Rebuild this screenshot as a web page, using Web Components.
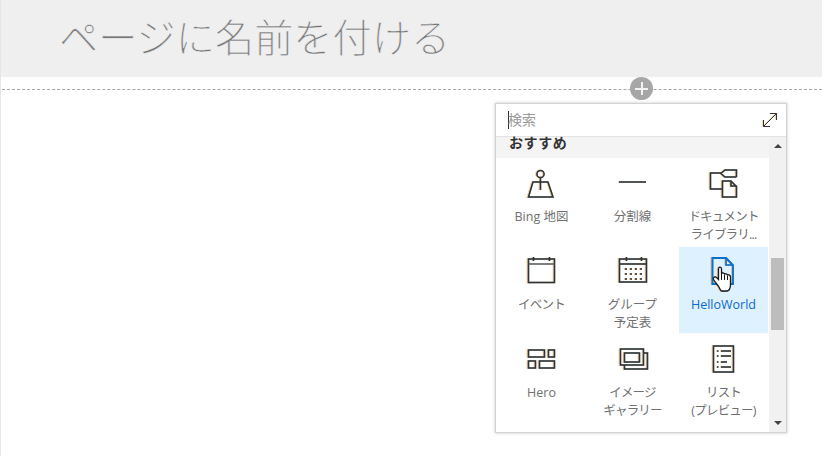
<!DOCTYPE html>
<html lang="ja"><head><meta charset="utf-8"><title>Page</title>
<style>
html,body{margin:0;padding:0;background:#fff;height:100%;overflow:hidden}
body{font-family:"Open Sans","Noto Sans CJK JP",sans-serif}
svg{display:block;overflow:visible}
svg .s,svg .a{fill:none;stroke:#333;stroke-width:1.5}
.k{letter-spacing:-.8px}
</style></head><body>
<x-page>
  <x-title-band slot="top">ページに名前を付ける</x-title-band>
  <x-add-line slot="top"></x-add-line>
  <x-toolbox slot="over" placeholder="検索" heading="おすすめ">
    <x-tool>
      <svg width="28" height="30" viewBox="528 168 28 30"><circle class="a" cx="540.5" cy="174" r="3.6"/><path class="a" d="M540.500 178V190"/><path class="a" d="M533 182H548L553 197H528.500Z"/></svg>
      <span slot="label">Bing 地図</span>
    </x-tool>
    <x-tool>
      <svg width="28" height="30" viewBox="618 168 28 30"><path class="s" d="M618 182H645"/></svg>
      <span slot="label">分割線</span>
    </x-tool>
    <x-tool>
      <svg width="28" height="30" viewBox="710 168 28 30"><path class="a" d="M721 173H710.500V189H722"/><path class="a" d="M736.500 177V170H725L721 173.500L725 177H736.500"/><path class="a" d="M722.500 181H731L736.500 186.500V197H722.500Z"/><path class="a" d="M731 181V186H736.500"/></svg>
      <span slot="label" class="k">ドキュメント<br>ライブラリ...</span>
    </x-tool>
    <x-tool>
      <svg width="28" height="30" viewBox="528 256 28 30"><path class="s" d="M528.500 259H554.500V282.500H528.500Z"/><path d="M528.500 264H554.500" fill="none" stroke="#555" stroke-width="1.200"/><path class="s" d="M533.500 257V261M549.500 257V261"/></svg>
      <span slot="label" class="k">イベント</span>
    </x-tool>
    <x-tool>
      <svg width="28" height="30" viewBox="618 256 28 30"><path class="s" d="M618.500 259H645.500V282H618.500Z"/><path class="s" d="M618.500 264H645.500M625.500 257V261M640.500 257V261"/><g fill="#555"><rect x="624" y="268" width="2" height="2"/><rect x="629" y="268" width="2" height="2"/><rect x="634" y="268" width="2" height="2"/><rect x="639" y="268" width="2" height="2"/><rect x="624" y="273" width="2" height="2"/><rect x="629" y="273" width="2" height="2"/><rect x="634" y="273" width="2" height="2"/><rect x="639" y="273" width="2" height="2"/><rect x="624" y="278" width="2" height="2"/><rect x="629" y="278" width="2" height="2"/><rect x="634" y="278" width="2" height="2"/><rect x="639" y="278" width="2" height="2"/></g></svg>
      <span slot="label">グループ<br>予定表</span>
    </x-tool>
    <x-tool active>
      <svg width="28" height="36" viewBox="710 256 28 36"><path d="M712.500 258H726L733 265V284H712.500Z" fill="none" stroke="#0a6fd0" stroke-width="1.800"/><path d="M726 258V265H733" fill="none" stroke="#0a6fd0" stroke-width="1.500"/><path d="M719 287C717 284 714.500 281 713.500 279.500C712.500 277.500 715 276 716.500 277.500L718.500 279.500V269C718.500 266.500 721.500 266.500 721.500 269V274C721.500 272.500 724.500 272.500 724.500 274.500C724.500 273.500 727.500 273.500 727.500 275.500C727.500 274.500 730.500 274.500 730.500 277V284C730.500 288 729 291 726.500 291H721.500C720.500 291 720 289 719 287Z" fill="#fff" stroke="#1a1a1a" stroke-width="1.300"/><path d="M721.500 274V280M724.500 274.500V280M727.500 275.500V280" stroke="#1a1a1a" fill="none"/></svg>
      <span slot="label">HelloWorld</span>
    </x-tool>
    <x-tool>
      <svg width="28" height="30" viewBox="528 344 28 30"><path class="s" d="M528.500 350H544.500V357H528.500ZM548.500 350H554.500V357H548.500ZM528.500 361H535.500V368H528.500ZM539.500 361H554.500V368H539.500Z"/></svg>
      <span slot="label">Hero</span>
    </x-tool>
    <x-tool>
      <svg width="28" height="30" viewBox="618 344 28 30"><path class="s" d="M619.500 349H642.500V365H619.500ZM623.500 353H638.500V362H623.500ZM642.500 353H646.500V369H623.500V365"/></svg>
      <span slot="label" class="k">イメージ<br>ギャラリー</span>
    </x-tool>
    <x-tool>
      <svg width="28" height="30" viewBox="710 344 28 30"><path class="s" d="M713.500 346H733.500V372H713.500Z"/><path class="s" d="M721 351H731M721 356H731M721 362H727M721 367H731"/><path class="s" d="M717 351H718.500M717 356H718.500M717 362H718.500M717 367H718.500"/></svg>
      <span slot="label" class="k">リスト<br>(プレビュー)</span>
    </x-tool>
  </x-toolbox>
</x-page>
<script>
function def(name, html){
  customElements.define(name, class extends HTMLElement{
    constructor(){super();this.attachShadow({mode:'open'}).innerHTML=typeof html==='function'?html(this):html;}
  });
}
def('x-page',`<style>
:host{display:block;position:relative;width:822px;height:456px;overflow:hidden;box-sizing:border-box;border-left:1px solid #e6e6e6}
</style><slot name="top"></slot><slot name="over"></slot>`);
def('x-title-band',`<style>
:host{display:flex;align-items:center;height:77px;box-sizing:border-box;background:#efefef;padding:0 0 5px 58px;color:#777;
font:300 39.200px/1 "Noto Sans CJK JP",sans-serif;white-space:nowrap;-webkit-text-stroke:.5px #efefef}
</style><slot></slot>`);
def('x-add-line',`<style>
:host{display:block;position:relative;height:24px;box-sizing:border-box;padding-top:12px}
.line{margin-left:1px;border-top:1px dashed #a6a6a6}
.plus{position:absolute;left:629px;top:0;width:23px;height:23px;border-radius:50%;background:#a6a6a6}
.plus::before,.plus::after{content:"";position:absolute;background:#f2f2f2}
.plus::before{left:5px;right:5px;top:10.500px;height:2px}
.plus::after{top:5px;bottom:5px;left:10.500px;width:2px}
</style><div class="line"></div><div class="plus"></div>`);
def('x-toolbox',(el)=>`<style>
:host{display:flex;flex-direction:column;position:absolute;left:494px;top:103px;width:292px;height:330px;box-sizing:border-box;background:#fff;border:1px solid #d2d2d2;box-shadow:0 0 3px rgba(0,0,0,.22);overflow:hidden;font-family:"Open Sans","Noto Sans CJK JP",sans-serif}
.search{flex:none;display:flex;align-items:center;justify-content:space-between;height:33px;box-sizing:border-box;border-bottom:1px solid #e3e3e3;padding:0 8px 1px 12px;color:#9a9a9a;font-size:14px}
.search span{border-left:1px solid #333;line-height:18px;height:18px;display:block;text-indent:-1px}
.body{flex:1;display:flex;min-height:0}
.main{flex:none;width:273px;display:flex;flex-direction:column}
.head{flex:none;height:21px;box-sizing:border-box;background:#f4f4f4;padding-left:13px;font:700 14px/10px "Noto Sans CJK JP",sans-serif;letter-spacing:.6px;color:#333}
.grid{display:grid;grid-template-columns:repeat(3,91px);grid-auto-rows:88px}
.bar{flex:1;display:flex;flex-direction:column;align-items:center;background:#f1f1f1;position:relative;padding:0 2px 0 2px}
.up,.down{flex:none;width:0;height:0;border:4px solid transparent;border-top:0;border-bottom:4px solid #444;margin-top:7px}
.down{border-bottom:0;border-top:4px solid #444;margin:0 0 7px}
.track{flex:1;width:100%;padding-top:110px;box-sizing:border-box}
.thumb{height:72px;width:13px;margin:0 auto;background:#bdbdbd}
</style>
<div class="search"><span>${el.getAttribute('placeholder')}</span>
<svg width="16" height="16" viewBox="0 0 16 16" style="display:block;overflow:visible;filter:drop-shadow(.5px 0 0 rgba(150,60,200,.4)) drop-shadow(-.5px 0 0 rgba(230,140,40,.35))"><path d="M1.500 14.500L14.500 1.500M8 1.500H14.500V8M1.500 8V14.500H8" fill="none" stroke="#333" stroke-width="1"/></svg></div>
<div class="body"><div class="main"><div class="head">${el.getAttribute('heading')}</div><div class="grid"><slot></slot></div></div>
<div class="bar"><div class="up"></div><div class="track"><div class="thumb"></div></div><div class="down"></div></div></div>`);
def('x-tool',`<style>
:host{display:flex;flex-direction:column;align-items:center;box-sizing:border-box;margin:1px;padding-top:9px;color:#707070;font-size:12.500px;line-height:18px;text-align:center;position:relative}
:host([active]){background:#def1ff;color:#0b6ad0}
.icon{height:36px;display:flex;justify-content:center;padding-left:1px;margin-bottom:1px}
::slotted(svg){filter:drop-shadow(.5px 0 0 rgba(40,140,230,.5)) drop-shadow(-.5px 0 0 rgba(240,150,40,.5))}
.label{margin-top:3px;white-space:nowrap}
</style><div class="icon"><slot></slot></div><div class="label"><slot name="label"></slot></div>`);
</script>
</body></html>
